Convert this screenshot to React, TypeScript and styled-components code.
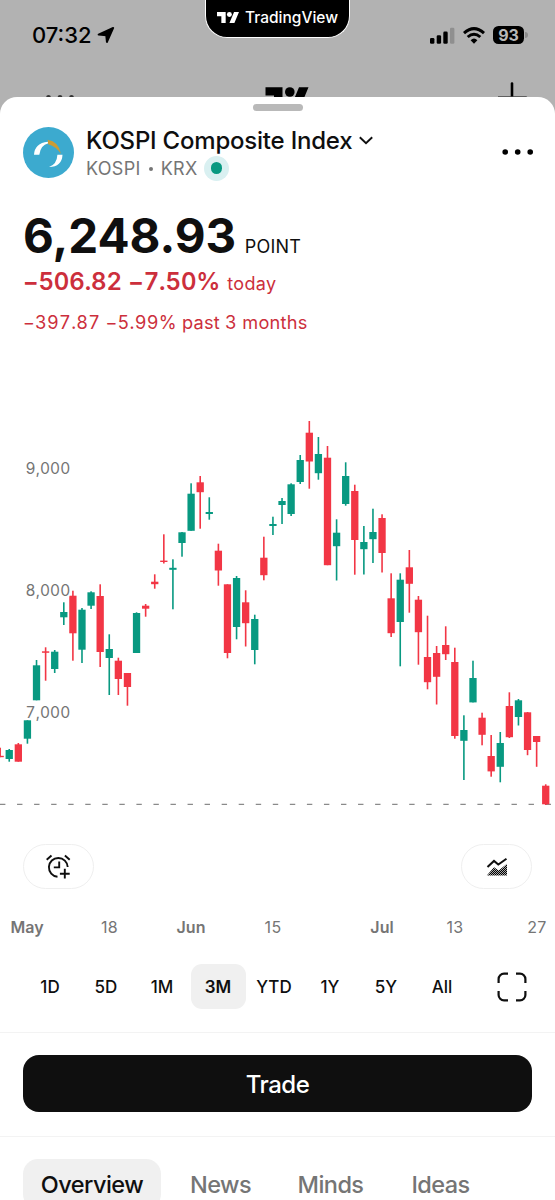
import React from "react";
import styled, { createGlobalStyle } from "styled-components";

const GlobalStyle = createGlobalStyle`
  * { box-sizing: border-box; }
  html, body { margin: 0; padding: 0; }
  body { font-family: Inter, "Liberation Sans", sans-serif; background: #b2b2b2; }
  button { font: inherit; border: 0; background: none; padding: 0; margin: 0; color: inherit; }
`;

const UP = "#089981";
const DOWN = "#f23645";

const Screen = styled.div`
  width: 555px;
  height: 1200px;
  overflow: hidden;
  background: #b2b2b2;
  color: #0f0f0f;
  position: relative;
  display: flex;
  flex-direction: column;
`;

const StatusBar = styled.div`
  height: 70px;
  flex: none;
  display: flex;
  justify-content: space-between;
  align-items: center;
  padding: 0 27.5px 0 32px;
  color: #000;
`;

const Clock = styled.div`
  display: flex;
  align-items: center;
  gap: 5px;
  font-size: 22px;
  font-weight: 500;
  letter-spacing: 0;
  line-height: 26px;
`;

const StatusIcons = styled.div`
  display: flex;
  align-items: center;
  gap: 8.2px;
`;

const Battery = styled.div`
  display: flex;
  align-items: center;
  gap: 1px;
`;

const BatteryBody = styled.div`
  width: 31px;
  height: 18px;
  border-radius: 5.5px;
  background: #000;
  color: #b8b8b8;
  font-size: 16px;
  font-weight: 700;
  line-height: 18px;
  text-align: center;
`;

const BatteryTip = styled.div`
  width: 2.5px;
  height: 6px;
  border-radius: 0 3px 3px 0;
  background: #8c8c8c;
`;

const BrandBadge = styled.div`
  position: absolute;
  top: 0;
  left: 205px;
  width: 145px;
  height: 38px;
  padding: 0 11px 2px;
  display: flex;
  justify-content: space-between;
  align-items: center;
  background: #000;
  border: 1.5px solid #fff;
  border-top: 0;
  border-radius: 0 0 22px 22px;
  color: #fff;
  font-size: 15.5px;
  font-weight: 500;
  line-height: 20px;
`;

const AppHeader = styled.div`
  height: 27px;
  flex: none;
  display: flex;
  justify-content: space-between;
  align-items: flex-start;
  overflow: hidden;
  padding: 12px 27px 0 45px;
`;

const Sheet = styled.main`
  flex: 1;
  background: #fff;
  border-radius: 17px 17px 0 0;
  display: flex;
  flex-direction: column;
`;

const Grabber = styled.div`
  width: 50px;
  height: 7.5px;
  margin: 6.5px auto 0;
  border-radius: 4px;
  background: #b9b9b9;
  flex: none;
`;

const SymbolRow = styled.div`
  display: flex;
  align-items: center;
  height: 56px;
  margin-top: 13px;
  padding: 0 22px 0 23px;
  flex: none;
`;

const SymbolText = styled.div`
  flex: 1;
  margin-left: 12px;
  padding-top: 2px;
`;

const SymbolName = styled.div`
  display: flex;
  align-items: center;
  gap: 6.5px;
  font-size: 24px;
  font-weight: 540;
  letter-spacing: -0.21px;
  line-height: 30px;
`;

const SymbolMeta = styled.div`
  display: flex;
  align-items: center;
  height: 25px;
  font-size: 18px;
  letter-spacing: 0.3px;
  color: #757575;
`;

const MetaDot = styled.span`
  width: 4px;
  height: 4px;
  margin: 1px 8px 0 8px;
  border-radius: 50%;
  background: #757575;
`;

const MarketStatus = styled.span`
  width: 25px;
  height: 25px;
  border-radius: 50%;
  margin-left: 6.5px;
  background: #d9f0f1;
  display: flex;
  align-items: center;
  justify-content: center;
  &::after {
    content: "";
    width: 11.5px;
    height: 11.5px;
    border-radius: 50%;
    background: ${UP};
  }
`;

const Quote = styled.section`
  padding: 27px 23px 0;
  height: 200px;
  flex: none;
`;

const PriceLine = styled.div`
  display: flex;
  align-items: baseline;
  gap: 8.5px;
  height: 59px;
  line-height: 58px;
`;

const Price = styled.span`
  font-size: 47.5px;
  font-weight: 700;
`;

const Currency = styled.span`
  font-size: 18px;
  letter-spacing: 0.2px;
`;

const DayChange = styled.div`
  display: flex;
  align-items: baseline;
  gap: 7px;
  color: #cc2f3c;
  line-height: 31px;
  font-size: 24px;
  font-weight: 560;
  font-variant-numeric: tabular-nums;
  letter-spacing: -0.1px;
  span { font-size: 18px; font-weight: 400; letter-spacing: 0.3px; }
`;

const PeriodChange = styled.div`
  margin-top: 11px;
  color: #cc2f3c;
  font-size: 18.2px;
  font-variant-numeric: tabular-nums;
  letter-spacing: 0.24px;
  line-height: 24px;
`;

const Chart = styled.svg`
  display: block;
  flex: none;
`;

const ScaleLabel = styled.text`
  font-size: 15.5px;
  font-variant-numeric: tabular-nums;
  letter-spacing: 0.1px;
  fill: #757575;
  stroke: #fff;
  stroke-opacity: 0.6;
  stroke-width: 4px;
  paint-order: stroke;
`;

const ChartActions = styled.div`
  display: flex;
  justify-content: space-between;
  padding: 0 23px;
  height: 45px;
  margin-top: 14px;
  flex: none;
`;

const PillButton = styled.button`
  width: 71px;
  height: 45px;
  border: 1px solid #efefef;
  border-radius: 22.5px;
  display: flex;
  align-items: center;
  justify-content: center;
`;

const TimeAxis = styled.div`
  display: grid;
  grid-template-columns: 54px 111px 52px 112px 106px 40px 124px;
  height: 24px;
  margin-top: 26px;
  flex: none;
  overflow: hidden;
`;

const TimeLabel = styled.span<{ $major?: boolean }>`
  font-size: 16px;
  line-height: 24px;
  text-align: center;
  color: #757575;
  letter-spacing: ${(p) => (p.$major ? "0" : "0.4px")};
  font-weight: ${(p) => (p.$major ? 600 : 400)};
`;

const RangeBar = styled.div`
  display: flex;
  justify-content: space-between;
  align-items: center;
  padding: 0 28px 0 22px;
  height: 45px;
  margin-top: 25px;
  flex: none;
`;

const Ranges = styled.div`
  display: grid;
  grid-template-columns: repeat(8, 56px);
`;

const Range = styled.button<{ $active?: boolean }>`
  height: 45px;
  width: 55px;
  justify-self: center;
  padding-top: 1px;
  border-radius: 11px;
  background: ${(p) => (p.$active ? "#f0f0f0" : "transparent")};
  font-size: 17px;
  font-weight: ${(p) => (p.$active ? 600 : 500)};
  color: #0f0f0f;
`;

const TradeArea = styled.div`
  margin-top: 23px;
  padding: 22px 23px 24px;
  border-top: 1.5px solid #f3f3f3;
  border-bottom: 1.5px solid #f3f3f3;
  flex: none;
`;

const TradeButton = styled.button`
  display: block;
  width: 100%;
  height: 57px;
  padding-top: 1px;
  border-radius: 16px;
  background: #0f0f0f;
  color: #fff;
  font-size: 24px;
  font-weight: 540;
  letter-spacing: -0.5px;
`;

const Tabs = styled.nav`
  display: flex;
  padding: 22px 23px 0;
  gap: 12px;
`;

const Tab = styled.button<{ $active?: boolean; $width: number }>`
  width: ${(p) => p.$width}px;
  height: 50px;
  flex: none;
  border-radius: 15px;
  background: ${(p) => (p.$active ? "#f0f0f0" : "transparent")};
  color: ${(p) => (p.$active ? "#0f0f0f" : "#757575")};
  font-size: 23.5px;
  font-weight: 500;
  letter-spacing: -0.55px;
`;

function BrandMark({ width }: { width: number }) {
  return (
    <svg width={width} height={width * 0.507} viewBox="0 4 35.5 18" fill="currentColor">
      <path d="M14 22H7V11H0V4h14v18zM28 22h-8l7.5-18h8L28 22z" />
      <circle cx="20" cy="8" r="4" />
    </svg>
  );
}

// Each entry: [direction, high, body top, body bottom, low] in chart units.
type Candle = ["u" | "d", number, number, number, number];
const candles: Candle[] = [
  ["d", 747.7, 755.8, 757.2, 757.2], ["u", 749, 750, 759, 761.7], ["d", 743, 744.3, 761.7, 761.7],
  ["u", 720.3, 720.3, 738.7, 743.7], ["u", 660, 665.3, 700.3, 700.3], ["d", 647.3, 651.3, 652.8, 680.7],
  ["u", 650, 651.7, 669, 673], ["u", 602.3, 612, 617.3, 625], ["d", 590.7, 595.7, 633.3, 660.7],
  ["u", 608, 609.7, 649.7, 663], ["u", 591.3, 592.3, 605.7, 609], ["d", 584.3, 596, 652, 667],
  ["u", 634.3, 649, 658, 695], ["d", 657.7, 660.7, 679, 695], ["d", 673, 673, 687, 705.7],
  ["u", 612.3, 613, 653, 653], ["d", 604, 605.7, 608.7, 616.7], ["d", 574.3, 581.7, 584.2, 588.7],
  ["d", 534.3, 560.6, 562, 563.5], ["u", 559.3, 567.8, 569.8, 609.3], ["u", 532, 532.3, 543, 556.7],
  ["u", 483.3, 493.7, 530.8, 530.8], ["d", 476, 482.3, 492.2, 528.7], ["u", 497.3, 512, 514, 519.7],
  ["d", 543.7, 550.7, 570.5, 585.7], ["d", 584.3, 584.3, 653, 658.3], ["u", 576, 578, 627, 639.3],
  ["d", 590.3, 602.3, 623.2, 646.5], ["u", 614.7, 619, 650, 664.3], ["d", 536.7, 557.7, 575.2, 580.3],
  ["u", 516.7, 524, 526, 535], ["u", 498, 501, 505, 524], ["u", 483.3, 484.3, 514, 516],
  ["u", 455, 460, 482, 484], ["d", 421, 432.7, 461.5, 488.7], ["u", 437, 454, 473.2, 479.7],
  ["d", 446, 457.7, 565.2, 565.2], ["u", 519.3, 532.7, 546.2, 580.5], ["u", 462.3, 476, 504, 505.7],
  ["d", 484.7, 491, 540, 574.7], ["u", 526, 542, 549.2, 574.5], ["u", 508.7, 532, 539.2, 563],
  ["d", 514.3, 518, 553, 572.5], ["d", 573.3, 598.3, 633.2, 637], ["u", 573.3, 579.7, 622, 666.3],
  ["d", 550, 567.3, 583.8, 612.7], ["d", 596, 599.7, 632.2, 664.7], ["d", 615.7, 657, 682.2, 689.3],
  ["d", 646, 653, 676.8, 704.5], ["d", 626.3, 645, 654.2, 660], ["d", 647.7, 662, 736, 738.7],
  ["u", 715.3, 730, 740.8, 780], ["u", 660.7, 678, 702.4, 702.4], ["d", 712.7, 717.7, 734.8, 745.3],
  ["d", 735, 756, 771.4, 776.7], ["u", 732, 743, 766.8, 782.3], ["d", 692.3, 706, 737.2, 738],
  ["u", 699, 700.3, 717, 725.5], ["d", 712, 712.3, 750, 755.2], ["d", 736, 736, 742, 766.8],
  ["d", 784.3, 785.7, 804.3, 805],
];

const scale = [
  { label: "9,000", y: 473.5 },
  { label: "8,000", y: 595.5 },
  { label: "7,000", y: 717.5 },
];

function CandleChart() {
  return (
    <Chart width="555" height="450" viewBox="0 380 555 450">
      <path d="M0 804.3H555" stroke="#8a8a8a" strokeWidth="1.2" strokeDasharray="5.4 11.65" />
      {candles.map(([dir, high, top, bottom, low], i) => {
        const x = 0.15 + i * 9.093;
        const color = dir === "u" ? UP : DOWN;
        return (
          <g key={i} fill={color}>
            <rect x={x - 0.8} y={high} width="1.6" height={low - high} />
            <rect x={x - 3.65} y={top} width="7.3" height={bottom - top} />
          </g>
        );
      })}
      {scale.map((s) => (
        <ScaleLabel key={s.label} x="25.5" y={s.y}>{s.label}</ScaleLabel>
      ))}
    </Chart>
  );
}

export default function App() {
  return (
    <>
      <GlobalStyle />
      <Screen>
        <StatusBar>
          <Clock>
            07:32
            <svg width="18" height="18" viewBox="0 0 18 18">
              <path d="M1.6 8.6 16.2 1.9 9.9 16 9.2 9.2Z" fill="#000" stroke="#000" strokeWidth="1.9" strokeLinejoin="round" />
            </svg>
          </Clock>
          <StatusIcons>
            <svg width="25" height="17" viewBox="0 0 25 17">
              <rect x="0" y="11" width="4.4" height="5.8" rx="1.3" />
              <rect x="6.7" y="8.3" width="4.4" height="8.5" rx="1.3" />
              <rect x="13.3" y="4.6" width="4.4" height="12.2" rx="1.3" />
              <rect x="20" y="0.8" width="4.4" height="16" rx="1.3" fill="#8f8f8f" />
            </svg>
            <svg width="22" height="17" viewBox="0 0 22 17" fill="none" stroke="#000" strokeWidth="3">
              <path d="M1 6.2Q11-2.9 21 6.2" />
              <path d="M4.7 10Q11 4.4 17.3 10" />
              <path d="M7.6 13.2Q11 10 14.4 13.2L11 16.7Z" fill="#000" stroke="none" />
            </svg>
            <Battery>
              <BatteryBody>93</BatteryBody>
              <BatteryTip />
            </Battery>
          </StatusIcons>
        </StatusBar>
        <AppHeader>
          <svg width="30" height="20" viewBox="0 0 30 20" fill="#333">
            <circle cx="3.5" cy="15.5" r="2.4" />
            <circle cx="15" cy="15.5" r="2.4" />
            <circle cx="26.5" cy="15.5" r="2.4" />
          </svg>
          <svg width="44" height="28" viewBox="0 0 44 28">
            <path d="M17.5 27H9V13.6H.5V5.2H17.5ZM34.5 27H25l9-21.8H43.5Z" />
            <circle cx="24.8" cy="10" r="4.8" />
          </svg>
          <svg width="30" height="30" viewBox="0 0 30 30" stroke="#000" strokeWidth="2.6" strokeLinecap="round">
            <path d="M14 1.5V28" />
            <path d="M.5 15.6H28" stroke="#444" />
          </svg>
        </AppHeader>
        <BrandBadge>
          <BrandMark width={22} />
          TradingView
        </BrandBadge>

        <Sheet>
          <Grabber />
          <SymbolRow>
            <svg width="51" height="51" viewBox="0 0 51 51">
              <circle cx="25.5" cy="25.5" r="25.5" fill="#3caacf" />
              <path d="M11 27.7Q11.8 16.2 24.7 14.8L25.3 16.2Q17.5 18 16.3 27.7Z" fill="#fff" />
              <path d="M24.7 12.8Q35.7 14.5 38 27Q33.4 19.5 25.2 17.2Z" fill="#cc9c35" />
              <path d="M39.5 27.7Q39 39.6 26 40.1Q34 37 34.4 27.7Z" fill="#fff" />
            </svg>
            <SymbolText>
              <SymbolName>
                KOSPI Composite Index
                <svg width="14" height="9" viewBox="0 0 14 9" fill="none" stroke="#0f0f0f" strokeWidth="1.9">
                  <path d="M.8 1.2 7 7.2 13.2 1.2" />
                </svg>
              </SymbolName>
              <SymbolMeta>
                KOSPI
                <MetaDot />
                KRX
                <MarketStatus />
              </SymbolMeta>
            </SymbolText>
            <svg width="31" height="8" viewBox="0 0 31 8">
              <circle cx="3.2" cy="4" r="2.8" />
              <circle cx="15.7" cy="4" r="2.8" />
              <circle cx="28.2" cy="4" r="2.8" />
            </svg>
          </SymbolRow>

          <Quote>
            <PriceLine>
              <Price>6,248.93</Price>
              <Currency>POINT</Currency>
            </PriceLine>
            <DayChange>
              −506.82 −7.50% <span>today</span>
            </DayChange>
            <PeriodChange>−397.87 −5.99% past 3 months</PeriodChange>
          </Quote>

          <CandleChart />

          <ChartActions>
            <PillButton aria-label="Add alert">
              <svg width="26" height="26" viewBox="0.5 0 26 26" fill="none" stroke="#0f0f0f" strokeWidth="1.9">
                <path d="M22.2 13A9.4 9.4 0 1 0 12 22.7" />
                <path d="M13.7 7.5V13.4H8.3" />
                <path d="M1.2 5.8 6 1.5M19.4 1.5 24.2 5.8" />
                <path d="M19.3 14.8V24.6M14.4 19.7H24.2" />
              </svg>
            </PillButton>
            <PillButton aria-label="Chart type">
              <svg width="22" height="20" viewBox="0 0 22 20">
                <defs>
                  <pattern id="check" width="2" height="2" patternUnits="userSpaceOnUse">
                    <rect width="2" height="2" fill="#aaa" />
                    <rect width="1" height="1" />
                    <rect x="1" y="1" width="1" height="1" />
                  </pattern>
                </defs>
                <path d="M1.5 10 8 3.9 12.3 7.5 20.5 1.7" fill="none" stroke="#0f0f0f" strokeWidth="2" />
                <path d="M.8 18.5 8 10.3 12.7 13.6 21 6.8V18.5Z" fill="url(#check)" />
              </svg>
            </PillButton>
          </ChartActions>

          <TimeAxis>
            <TimeLabel $major>May</TimeLabel>
            <TimeLabel>18</TimeLabel>
            <TimeLabel $major>Jun</TimeLabel>
            <TimeLabel>15</TimeLabel>
            <TimeLabel $major>Jul</TimeLabel>
            <TimeLabel>13</TimeLabel>
            <TimeLabel>27</TimeLabel>
          </TimeAxis>

          <RangeBar>
            <Ranges>
              {["1D", "5D", "1M", "3M", "YTD", "1Y", "5Y", "All"].map((r) => (
                <Range key={r} $active={r === "3M"}>{r}</Range>
              ))}
            </Ranges>
            <svg width="30" height="30" viewBox="0 0 30 30" fill="none" stroke="#0f0f0f" strokeWidth="2.2">
              <path d="M1.6 11V7A5.4 5.4 0 0 1 7 1.6H11M19 1.6H23A5.4 5.4 0 0 1 28.4 7V11M28.4 19V23A5.4 5.4 0 0 1 23 28.4H19M11 28.4H7A5.4 5.4 0 0 1 1.6 23V19" />
            </svg>
          </RangeBar>

          <TradeArea>
            <TradeButton>Trade</TradeButton>
          </TradeArea>

          <Tabs>
            <Tab $active $width={138}>Overview</Tab>
            <Tab $width={95}>News</Tab>
            <Tab $width={101}>Minds</Tab>
            <Tab $width={95}>Ideas</Tab>
          </Tabs>
        </Sheet>
      </Screen>
    </>
  );
}
